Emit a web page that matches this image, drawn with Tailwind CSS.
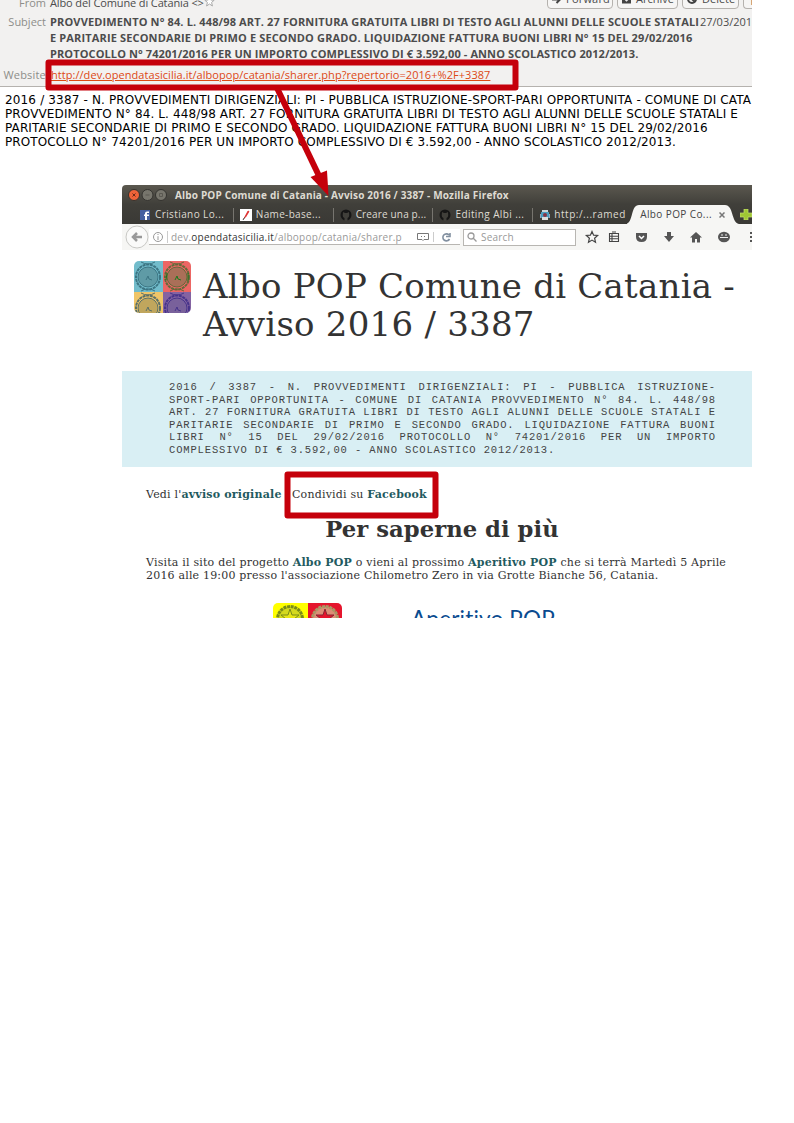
<!DOCTYPE html>
<html lang="it"><head><meta charset="utf-8"><title>Albo POP</title>
<script src="https://cdn.jsdelivr.net/npm/@tailwindcss/browser@4"></script></head>
<body class="bg-white">
<main class="relative w-[752px] h-[618px] overflow-hidden bg-white whitespace-nowrap">
 <!-- mail header -->
 <header class="h-[87px] bg-[#f2f1f0] border-b border-[#b5b2ae] font-['Open_Sans',sans-serif] text-[11px] text-[#4c4c4c]">
  <div class="flex h-[14px] justify-between">
   <div class="flex -mt-[5px] h-4 leading-4"><span class="w-[46px] text-right text-[#8d8d89] mr-[4px]">From</span><span class="tracking-[-0.12px]">Albo del Comune di Catania &lt;&gt;</span>
    <svg class="w-[11px] h-[11px] mt-[1px]" viewBox="0 0 11 11" fill="#fff" stroke="#aaa"><path d="M5.500 1l1.300 3 3.400.2-2.600 2.200.8 3.600-2.900-2-2.900 2 .8-3.600L.8 4.200l3.400-.2z"/></svg></div>
   <div class="flex gap-[4px] -mt-[11px] h-5 leading-[22px]">
    <div class="w-[66px] border border-[#b5b2ae] rounded bg-[#f6f5f4] flex items-center pl-1 gap-[5px]"><svg class="w-[9px] h-[9px]" viewBox="0 0 9 9" stroke="#444" stroke-width="2" fill="none"><path d="M0 4.500h8M4.500 1l3.500 3.500L4.500 8"/></svg><span class="tracking-[0.2px]">Forward</span></div>
    <div class="w-[61px] border border-[#b5b2ae] rounded bg-[#f6f5f4] flex items-center pl-1 gap-[5px]"><svg class="w-[9px] h-[10px]" viewBox="0 0 10 10"><path d="M0 0h10v10H0z" fill="#444"/><path d="M3 3h4v3l-2 2-2-2z" fill="#eee"/></svg>Archive</div>
    <div class="w-[57px] border border-[#b5b2ae] rounded bg-[#f6f5f4] flex items-center pl-1 gap-[5px]"><svg class="w-[10px] h-[10px]" viewBox="0 0 10 10" fill="none" stroke="#444" stroke-width="2"><circle cx="5" cy="5" r="4"/><path d="M2 2l6 6"/></svg>Delete</div>
    <div class="w-[9px] border border-r-0 border-[#b5b2ae] rounded-l bg-[#f6f5f4] pl-[5px] overflow-hidden">T</div>
   </div>
  </div>
  <div class="flex h-[51px] leading-4"><span class="w-[46px] shrink-0 text-right text-[#8d8d89] mr-[4px]">Subject</span>
   <div class="font-bold w-[650px] shrink-0"><div class="tracking-[0.14px]">PROVVEDIMENTO N° 84. L. 448/98 ART. 27 FORNITURA GRATUITA LIBRI DI TESTO AGLI ALUNNI DELLE SCUOLE STATALI</div><div class="tracking-[0.143px]">E PARITARIE SECONDARIE DI PRIMO E SECONDO GRADO. LIQUIDAZIONE FATTURA BUONI LIBRI N° 15 DEL 29/02/2016</div><div class="tracking-[0.1px]">PROTOCOLLO N° 74201/2016 PER UN IMPORTO COMPLESSIVO DI € 3.592,00 - ANNO SCOLASTICO 2012/2013.</div></div>
   <span>27/03/201</span></div>
  <div class="flex leading-[20px]"><span class="w-[46px] text-right text-[#8d8d89] mr-[5px] tracking-[0.2px]">Website</span><a class="text-[#dd4814] underline tracking-[0.05px]">http://dev.opendatasicilia.it/albopop/catania/sharer.php?repertorio=2016+%2F+3387</a></div>
 </header>
 <!-- mail body -->
 <section class="h-[98px] pt-[6px] pl-[5px] font-['DejaVu_Sans',sans-serif] text-[12px] leading-[14px] text-black">
  <div class="tracking-[0.155px]">2016 / 3387 - N. PROVVEDIMENTI DIRIGENZIALI: PI - PUBBLICA ISTRUZIONE-SPORT-PARI OPPORTUNITA - COMUNE DI CATA</div>
  <div class="tracking-[0.12px]">PROVVEDIMENTO N° 84. L. 448/98 ART. 27 FORNITURA GRATUITA LIBRI DI TESTO AGLI ALUNNI DELLE SCUOLE STATALI E</div>
  <div class="tracking-[0.11px]">PARITARIE SECONDARIE DI PRIMO E SECONDO GRADO. LIQUIDAZIONE FATTURA BUONI LIBRI N° 15 DEL 29/02/2016</div>
  <div class="tracking-[0.11px]">PROTOCOLLO N° 74201/2016 PER UN IMPORTO COMPLESSIVO DI € 3.592,00 - ANNO SCOLASTICO 2012/2013.</div>
 </section>
 <!-- browser window -->
 <section class="ml-[122px] w-[630px] h-[433px] overflow-hidden">
  <div class="h-[39px] rounded-tl bg-linear-to-b from-[#5b584f] via-[#403f3a] to-[#3a3935] font-['Open_Sans',sans-serif] text-[10px] text-[#dfdbd2]">
   <div class="h-5 pl-[6px] flex items-center">
    <svg class="w-[40px] h-[12px] mr-[7px]" viewBox="0 0 40 12"><g stroke="#34332f"><circle cx="6" cy="6" r="5.500" fill="#ee6339"/><circle cx="19.500" cy="6" r="5.500" fill="#77756c"/><circle cx="33" cy="6" r="5.500" fill="#77756c"/></g><path d="M4.500 4.500l3 3M7.500 4.500l-3 3" fill="none" stroke="#6b2a18"/><path d="M17.500 6h4M31.500 4.500h3v3h-3z" fill="none" stroke="#5a5851"/></svg>
    <b class="tracking-[0.17px]">Albo POP Comune di Catania - Avviso 2016 / 3387 - Mozilla Firefox</b>
   </div>
   <div class="h-[19px] flex items-center tracking-[0.4px]">
    <div class="w-[112px] h-[14px] pl-[18px] flex items-center gap-[5px] border-r border-[#77756f] tracking-[0.4px]"><svg class="w-[10px] h-[10px]" viewBox="0 0 10 10"><path d="M0 0h10v10H0z" fill="#4560a0"/><path d="M7 10V6h2V4.500H7V3h2V1.500H7Q5 1.500 5 3.500v1H4V6h1v4z" fill="#fff"/></svg>Cristiano Lo...</div>
    <div class="w-[100px] h-[14px] pl-[6px] flex items-center gap-[4px] border-r border-[#77756f]"><svg class="w-[12px] h-[12px]" viewBox="0 0 12 12"><path d="M0 0h12v12H0z" fill="#fff"/><path d="M4 9.500L8 2l1 .5-3 5z" fill="#d22" stroke="#d22" stroke-width=".7"/><path d="M3 11l1.500-2.500" stroke="#444"/></svg><span class="tracking-[0.33px]">Name-base...</span></div>
    <div class="w-[100px] h-[14px] pl-[6px] flex items-center gap-[4px] border-r border-[#77756f]"><svg class="w-[12px] h-[12px]" viewBox="0 0 12 12"><circle cx="6" cy="6" r="5.500" fill="#161616"/><path d="M4.500 12V9C2 8 3 5 3 3l2 1h2l2-1c0 2 1 5-1.500 6v3z" fill="#403f3a"/></svg><span class="tracking-[0.15px]">Creare una p...</span></div>
    <div class="w-[100px] h-[14px] pl-[6px] flex items-center gap-[4px] border-r border-[#77756f]"><svg class="w-[12px] h-[12px]" viewBox="0 0 12 12"><circle cx="6" cy="6" r="5.500" fill="#161616"/><path d="M4.500 12V9C2 8 3 5 3 3l2 1h2l2-1c0 2 1 5-1.500 6v3z" fill="#403f3a"/></svg>Editing Albi ...</div>
    <div class="w-[94px] h-[14px] pl-[7px] flex items-center gap-[4px]"><svg class="w-[10px] h-[12px]" viewBox="0 0 10 12"><path d="M2 1h6v4H2z" fill="#c9d4da"/><path d="M1 3h8v6H1z" fill="#4a9cc0"/><path d="M2 8h6v3H2z" fill="#ddd"/><circle cx="5" cy="6" r="2" fill="#834"/><path d="M0 5h1v4H0zM9 5h1v4H9z" fill="#9ab"/></svg><span class="tracking-[0.52px]">http:/...ramed</span></div>
    <div class="relative w-[112px] h-[19px] flex items-center pl-[13px] text-[#444]"><svg class="absolute left-0 top-0 w-[112px] h-[19px]" viewBox="0 0 112 19"><path d="M-2 19C7 19 3 0 12 0h86c9 0 6 19 15 19z" fill="#f6f6f4"/></svg><span class="relative tracking-[0.4px]">Albo POP Co...</span><svg class="relative w-[6px] h-[6px] ml-[7px]" viewBox="0 0 6 6" stroke="#777" stroke-width="1.500"><path d="M.5.5l5 5M5.500.5l-5 5"/></svg></div>
    <svg class="w-[12px] h-[11px] shrink-0 ml-[1px]" viewBox="0 0 12 11"><path d="M4 0h4v4h4v4H8v3H4V8H0V4h4z" fill="#9fc733" stroke="#c5df70" stroke-width=".7"/></svg>
   </div>
  </div>
  <div class="h-[26px] bg-[#f6f6f4] flex items-center font-['Open_Sans',sans-serif] text-[10px] text-[#999] pl-[3px]">
   <svg class="w-[24px] h-[24px] shrink-0" viewBox="0 0 24 24"><circle cx="12" cy="12" r="11" fill="#fafaf9" stroke="#c8c8c5"/><path d="M8 12h9M12 8l-4 4 4 4" fill="none" stroke="#999" stroke-width="2.500"/></svg>
   <div class="w-[311px] h-[16px] bg-white border-b border-[#b8b6b2] flex items-center pl-[4px]">
    <svg class="w-[10px] h-[10px] shrink-0" viewBox="0 0 10 10" fill="none" stroke="#999"><circle cx="5" cy="5" r="4.500"/><path d="M5 2v1M5 4.200V8"/></svg>
    <span class="ml-[4px] pl-[3px] border-l border-[#ccc] leading-[12px] w-[240px] shrink-0 tracking-[0.23px]">dev.<span class="text-[#333]">opendatasicilia.it</span>/albopop/catania/sharer.p</span>
    <svg class="w-[12px] h-[8px] ml-[10px] shrink-0" viewBox="0 0 12 8" fill="none" stroke="#777"><path d="M.5.500h11v6H7L6 7.500 5 6.500H.5zM4 3.500h1M7 3.500h1"/></svg>
    <svg class="w-[20px] h-[10px] ml-[4px] shrink-0" viewBox="0 0 20 10" fill="none"><path d="M.5 0v10" stroke="#ccc"/><path d="M16 3a3.500 3.500 0 1 0 .5 4M17 1v3.500h-4" stroke="#8290a0" stroke-width="1.600"/></svg>
   </div>
   <div class="w-[113px] h-[17px] ml-[3px] bg-white border border-[#b8b6b2] flex items-center pl-[3px] gap-[4px] tracking-[0.2px]"><svg class="w-[10px] h-[10px]" viewBox="0 0 10 10" fill="none" stroke="#999" stroke-width="1.300"><circle cx="4" cy="4" r="3"/><path d="M6.300 6.300L9.500 9.500"/></svg>Search</div>
   <svg class="w-[176px] h-[14px] shrink-0" viewBox="0 0 176 14"><g fill="none" stroke="#444"><path d="M16 1.500l1.600 3.700 4 .3-3 2.700.9 4-3.500-2.100-3.500 2.100.9-4-3-2.700 4-.3z" stroke-width="1.200"/><path d="M33.500 3.500h9v8h-9zM36 2h4M33.500 6.200h9M33.500 8.800h9M36 4v7" stroke-width="1.100"/></g><g fill="#555"><path d="M60 3h11v4q0 5-5.500 5T60 7z"/><path d="M91 2h4v4h3l-5 6-5-6h3z"/><path d="M120 2l6 5.500h-2v5h-3V9h-2v3.500h-3v-5h-2z"/><ellipse cx="148" cy="7" rx="6" ry="5.200"/><path d="M174 2h2v2h-2zM174 6h2v2h-2zM174 10h2v2h-2z"/></g><path d="M63 6l2.500 2.500L68 6" fill="none" stroke="#fff" stroke-width="1.500"/><path d="M144 7.500h8M145 5h2M149 5h2" stroke="#eee"/></svg>
  </div>
  <div class="h-[121px] pl-[12px] pt-[11px] flex font-['DejaVu_Serif',serif] text-[#333]">
   <svg class="w-[57px] h-[52px] rounded-[5px] shrink-0" viewBox="0 0 57 52"><path d="M0 0h29v31H0z" fill="#72bccb"/><path d="M29 0h28v31H29z" fill="#ec6664"/><path d="M0 31h29v21H0z" fill="#efc568"/><path d="M29 31h28v21H29z" fill="#8463a2"/>
    <g fill="#5f9ba6" stroke="#3c7583"><circle cx="14" cy="16" r="10"/><ellipse cx="14" cy="16" rx="12" ry="12.500" fill="none" stroke-width="2" stroke-dasharray="3 .7"/><path d="M7 1q7 4 14 0M7 30q7-4 14 0M12 19l2-4 1 3 3 1" fill="none"/></g>
    <g fill="#aa6f58" stroke="#626b3a"><circle cx="43" cy="16" r="10"/><ellipse cx="43" cy="16" rx="12" ry="12.500" fill="none" stroke-width="2" stroke-dasharray="3 .7"/><path d="M36 1q7 4 14 0M36 30q7-4 14 0" fill="none"/><path d="M41 19l2-4 1 3 3 1M33 12l-1 7M54 12v8" fill="none" stroke="#187a1c"/></g>
    <g fill="#c0a65d" stroke="#5b7068"><circle cx="14" cy="47" r="10"/><ellipse cx="14" cy="47" rx="12" ry="12.500" fill="none" stroke-width="2" stroke-dasharray="3 .7"/><path d="M7 32q7 4 14 0M12 50l2-4 1 3 3 1" fill="none"/></g>
    <g fill="#79619b" stroke="#47348a"><circle cx="43" cy="47" r="10"/><ellipse cx="43" cy="47" rx="12" ry="12.500" fill="none" stroke-width="2" stroke-dasharray="3 .7"/><path d="M36 32q7 4 14 0M41 50l2-4 1 3 3 1" fill="none"/></g></svg>
   <h1 class="ml-[12px] mt-[6px] text-[34px] leading-[38px] tracking-[0.24px]">Albo POP Comune di Catania -<br>Avviso 2016 / 3387</h1>
  </div>
  <div class="h-[96px] bg-[#d9eff4] pl-[47px] pt-[10px] font-['Liberation_Mono',monospace] text-[10.500px] leading-[12.600px] tracking-[0.850px] text-[#444]">
   <div class="w-[547px]">
    <div class="flex justify-between"><span>2016</span><span>/</span><span>3387</span><span>-</span><span>N.</span><span>PROVVEDIMENTI</span><span>DIRIGENZIALI:</span><span>PI</span><span>-</span><span>PUBBLICA</span><span>ISTRUZIONE-</span></div>
    <div class="flex justify-between"><span>SPORT-PARI</span><span>OPPORTUNITA</span><span>-</span><span>COMUNE</span><span>DI</span><span>CATANIA</span><span>PROVVEDIMENTO</span><span>N°</span><span>84.</span><span>L.</span><span>448/98</span></div>
    <div class="flex justify-between"><span>ART.</span><span>27</span><span>FORNITURA</span><span>GRATUITA</span><span>LIBRI</span><span>DI</span><span>TESTO</span><span>AGLI</span><span>ALUNNI</span><span>DELLE</span><span>SCUOLE</span><span>STATALI</span><span>E</span></div>
    <div class="flex justify-between"><span>PARITARIE</span><span>SECONDARIE</span><span>DI</span><span>PRIMO</span><span>E</span><span>SECONDO</span><span>GRADO.</span><span>LIQUIDAZIONE</span><span>FATTURA</span><span>BUONI</span></div>
    <div class="flex justify-between"><span>LIBRI</span><span>N°</span><span>15</span><span>DEL</span><span>29/02/2016</span><span>PROTOCOLLO</span><span>N°</span><span>74201/2016</span><span>PER</span><span>UN</span><span>IMPORTO</span></div>
    <div>COMPLESSIVO DI € 3.592,00 - ANNO SCOLASTICO 2012/2013.</div>
   </div>
  </div>
  <div class="pl-[24px] pt-[21px] font-['DejaVu_Serif',serif] text-[11px] leading-[13px] tracking-[0.2px] text-[#333]">
   <p class="h-[13px] flex"><span class="w-[146px]">Vedi l'<b class="text-[#1f5a60] tracking-[0.2px]">avviso originale</b></span><span class="tracking-[0.2px]">Condividi su <b class="text-[#1f5a60]">Facebook</b></span></p>
   <h2 class="mt-[14px] h-[28px] leading-[28px] w-[592px] text-center text-[22.700px] font-bold tracking-[0.04px]">Per saperne di più</h2>
   <p class="mt-[13px]">Visita il sito del progetto <b class="text-[#1f5a60]">Albo POP</b> o vieni al prossimo <b class="text-[#1f5a60]">Aperitivo POP</b> che si terrà Martedì 5 Aprile<br><span class="tracking-[0.19px]">2016 alle 19:00 presso l'associazione Chilometro Zero in via Grotte Bianche 56, Catania.</span></p>
   <div class="mt-[21px] ml-[127px] flex">
    <svg class="w-[69px] h-[31px] rounded-t-[5px]" viewBox="0 0 69 31"><path d="M0 0h35v31H0z" fill="#ffff00"/><path d="M35 0h34v31H35z" fill="#e5152d"/><g fill="#d4d91e" stroke="#788c18" stroke-width="3"><circle cx="17" cy="16" r="12.500" stroke-dasharray="3 .7"/><path d="M17 6l2 6h7l-5 4-8 0-5-4h7z" fill="#e8e616" stroke-width="1"/></g><g fill="#dd8d76" stroke="#a99864" stroke-width="3"><circle cx="52" cy="16" r="12.500" stroke-dasharray="3 .7"/><path d="M52 6l2 6h7l-5 4-8 0-5-4h7z" fill="#e5152d" stroke="#8b2433" stroke-width="1"/></g></svg>
    <span class="ml-[69px] mt-px font-['Lato',sans-serif] text-[22.500px] leading-[30px] text-[#0a4b8f] tracking-[0.180px]">Aperitivo POP</span>
   </div>
  </div>
 </section>
 <!-- red annotations -->
 <svg class="absolute left-0 top-0 w-[752px] h-[618px]" viewBox="0 0 752 618" fill="none" stroke="#c5000b" stroke-width="6" stroke-linejoin="round"><rect x="48.500" y="62.500" width="467" height="25"/><rect x="287.500" y="474.500" width="148" height="41"/><path d="M277 88L320 178"/><path d="M328.500 196L310.500 177L327 170.500z" fill="#c5000b" stroke="none"/></svg>
</main>
</body></html>
